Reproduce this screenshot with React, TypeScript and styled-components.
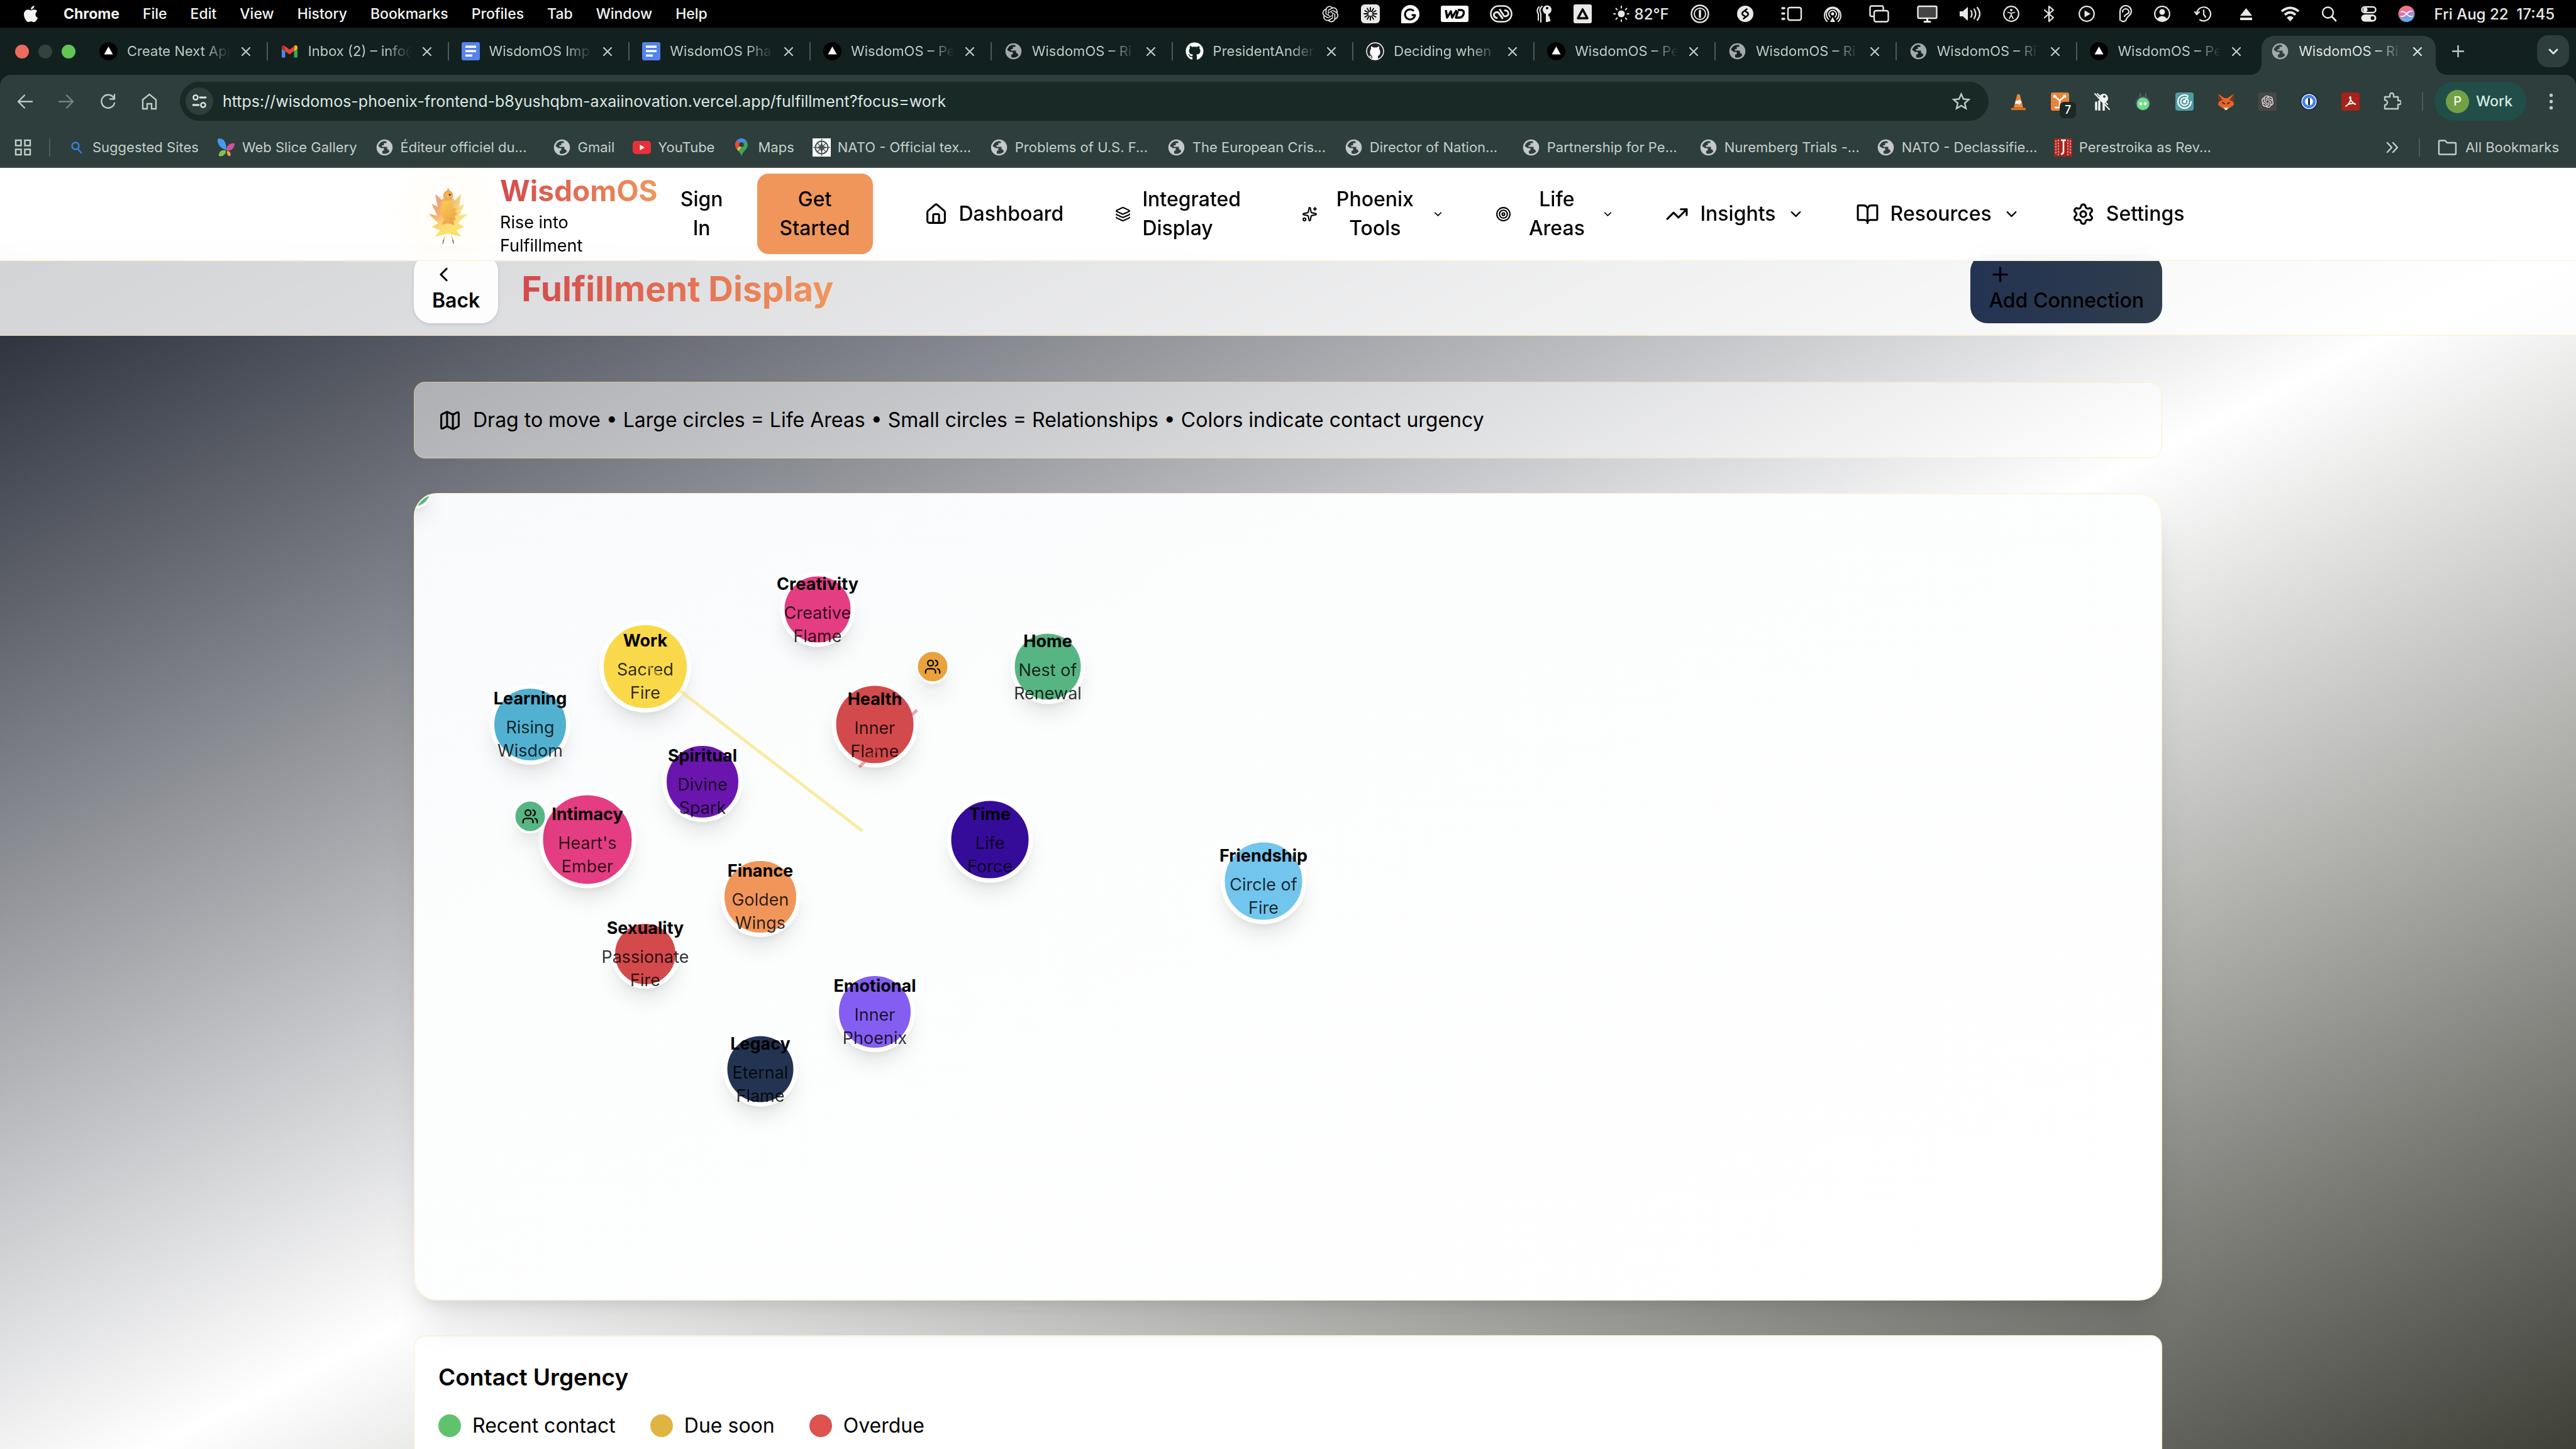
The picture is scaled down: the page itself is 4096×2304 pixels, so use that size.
import React from "react";
import styled, { createGlobalStyle, css } from "styled-components";
import {
  BookOpen,
  ChevronDown,
  ChevronLeft,
  House,
  Layers,
  Map as MapIcon,
  Plus,
  Settings,
  Sparkles,
  Target,
  TrendingUp,
  Users,
} from "lucide-react";
import { FaApple, FaGithub } from "react-icons/fa";
import { RiOpenaiFill } from "react-icons/ri";

const color = {
  strip: "#12211f",
  bar: "#2d3e3c",
  field: "#182926",
  chromeText: "#bfcbc8",
  chromeBright: "#e1e7e5",
  line: "#4a5c59",
  ink: "#000000",
  gold: "rgba(250, 217, 73, 0.2)",
  red: "#d34a4c",
  orange: "#f0965b",
};

const GlobalStyle = createGlobalStyle`
  *, *::before, *::after { box-sizing: border-box; }
  body { margin: 0; background: #ffffff; overflow: hidden; }
  button, input { font: inherit; color: inherit; }
  button { border: 0; padding: 0; background: none; cursor: pointer; }
  a { color: inherit; text-decoration: none; }
  svg { display: block; flex: none; }
  h1, h2, p, ul { margin: 0; padding: 0; }
`;

const Screen = styled.div`
  height: 100vh;
  display: flex;
  flex-direction: column;
  overflow: hidden;
  font-family: Inter, "Liberation Sans", sans-serif;
  color: ${color.ink};
`;

/* ---------- macOS menu bar ---------- */

const MenuBar = styled.div`
  flex: none;
  height: 44px;
  padding: 0 34px;
  display: flex;
  align-items: center;
  background: #000;
  color: #f4f4f4;
  font-size: 23px;
  font-weight: 500;
`;

const MenuList = styled.nav`
  display: flex;
  align-items: center;
  gap: 37px;
  flex: 1;
`;

const MenuItem = styled.button<{ $bold?: boolean }>`
  font-weight: ${(p) => (p.$bold ? 700 : 500)};
  white-space: nowrap;
`;

const Status = styled.div`
  display: flex;
  align-items: center;
  color: #e8e8e8;
`;

const GAPS = { s: 34, m: 38, l: 44 };

const StatusIcon = styled.button<{ $w: number; $gap: keyof typeof GAPS }>`
  width: ${(p) => p.$w}px;
  height: 30px;
  margin-left: ${(p) => GAPS[p.$gap]}px;
  display: flex;
  align-items: center;
  justify-content: center;
`;

const Weather = styled.button`
  display: flex;
  align-items: center;
  gap: 8px;
  margin-left: 34px;
  font-size: 24px;
  white-space: nowrap;
`;

const Clock = styled.time`
  margin-left: 31px;
  font-size: 24px;
  white-space: pre;
`;

const Pic = ({ w, h = 28, children }: { w: number; h?: number; children: React.ReactNode }) => (
  <svg width={w} height={h} viewBox={`0 0 ${w} ${h}`} fill="none" stroke="currentColor" strokeWidth="2.4" strokeLinecap="round" strokeLinejoin="round" aria-hidden>
    {children}
  </svg>
);

const rays = (n: number, cx: number, cy: number, r1: number, r2: number) =>
  Array.from({ length: n }, (_, i) => {
    const a = (i / n) * Math.PI * 2;
    return <path key={i} d={`M${cx + r1 * Math.cos(a)} ${cy + r1 * Math.sin(a)}L${cx + r2 * Math.cos(a)} ${cy + r2 * Math.sin(a)}`} />;
  });

type StatusEntry = { name: string; w: number; gap: keyof typeof GAPS; pic: React.ReactNode };

const appStatus: StatusEntry[] = [
  { name: "ChatGPT", w: 29, gap: "s", pic: <RiOpenaiFill size={31} /> },
  {
    name: "Claude", w: 30, gap: "s",
    pic: <Pic w={30} h={30}><rect width="30" height="30" rx="6" fill="currentColor" stroke="none" /><g stroke="#000" strokeWidth="1.8">{rays(12, 15, 15, 4, 10)}</g></Pic>,
  },
  {
    name: "Grammarly", w: 29, gap: "s",
    pic: <Pic w={29} h={29}><path d="M0 29V14A14.500 14.500 0 1 1 14.500 29Z" fill="#fff" stroke="none" /><path d="M20 9.500A8 8 0 1 0 22 16H16.500" stroke="#000" strokeWidth="3" strokeLinecap="butt" /></Pic>,
  },
  {
    name: "WD", w: 44, gap: "s",
    pic: <Pic w={44} h={26}><rect width="44" height="26" rx="3" fill="#fff" stroke="none" /><path d="M8 7L10 19L16 9L18 19L25 7M27 7H33Q38 8 36 14Q34 19 29 19H24L27 9" stroke="#000" strokeWidth="3.400" strokeLinecap="butt" /></Pic>,
  },
  {
    name: "Creative Cloud", w: 36, gap: "s",
    pic: <Pic w={36}><rect x="1.500" y="1.500" width="33" height="25" rx="12.500" strokeWidth="2.600" /><path d="M20 21L13.500 12A5 5 0 0 0 6.500 14.500A5 5 0 0 0 11 20.500M16 7.500L22.500 17.500A5 5 0 0 0 29.500 14A5.500 5.500 0 0 0 24 8.500" strokeWidth="3" /></Pic>,
  },
  {
    name: "Keychain", w: 25, gap: "m",
    pic: <Pic w={25}><circle cx="17" cy="7.500" r="7" fill="currentColor" stroke="none" /><path d="M17 12V27M17 24H22M17 20H21" strokeWidth="4" strokeLinecap="butt" /><circle cx="17" cy="5" r="2" fill="#000" stroke="none" /><path d="M9 2Q3 7 7 13V27M4 3Q-1 8 3 14V24" strokeWidth="2" /></Pic>,
  },
  {
    name: "Text input", w: 29, gap: "s",
    pic: <Pic w={29} h={30}><rect width="29" height="30" rx="3" fill="currentColor" stroke="none" /><path d="M14.500 8L22 22H7Z" stroke="#000" strokeWidth="3.600" /></Pic>,
  },
];

const systemStatus: StatusEntry[] = [
  { name: "1Password", w: 30, gap: "s", pic: <Pic w={30} h={30}><circle cx="15" cy="15" r="13.500" /><circle cx="15" cy="15" r="9" strokeWidth="2" /><path d="M15 10V20" strokeWidth="3.500" /></Pic> },
  { name: "Shazam", w: 26, gap: "l", pic: <Pic w={26}><circle cx="13" cy="14" r="13" fill="currentColor" stroke="none" /><path d="M15.500 6.500L9 11.500A3.200 3.200 0 0 0 9.500 16L12 17.500M10.500 21.500L17 16.500A3.200 3.200 0 0 0 16.500 12L14 10.500" stroke="#000" strokeWidth="2.600" /></Pic> },
  { name: "Stage Manager", w: 34, gap: "l", pic: <Pic w={34}><rect x="11" y="4" width="21" height="20" rx="3" /><path d="M2 5H5M2 13.500H5M2 22H5" strokeWidth="3.500" /></Pic> },
  { name: "AirDrop", w: 28, gap: "s", pic: <Pic w={28}><circle cx="14" cy="14" r="2.500" fill="currentColor" stroke="none" /><path d="M10 19A6 6 0 1 1 18 19M7.500 22.500A10 10 0 1 1 20.500 22.500M5 26A13 13 0 1 1 23 26" strokeWidth="2" /><path d="M14 19L10 27H18Z" fill="currentColor" stroke="none" /></Pic> },
  { name: "Windows", w: 32, gap: "l", pic: <Pic w={32}><path d="M6 18H4A2.500 2.500 0 0 1 1.500 15.500V4A2.500 2.500 0 0 1 4 1.500H20A2.500 2.500 0 0 1 22.500 4V7" /><rect x="8" y="9" width="22.500" height="17.500" rx="3" /></Pic> },
  { name: "Display", w: 33, gap: "l", pic: <Pic w={33}><rect x="1.500" y="2" width="30" height="19" rx="2" fill="#444" /><path d="M16.500 22V26M12 26.500H21" strokeWidth="3" /></Pic> },
  { name: "Sound", w: 36, gap: "s", pic: <Pic w={36}><path d="M1 10H6L14 3V25L6 18H1Z" fill="currentColor" stroke="none" /><path d="M19 9Q22 14 19 19M24 6.500Q29 14 24 21.500M29 4Q37 14 29 24" strokeWidth="2.200" /></Pic> },
  { name: "Accessibility", w: 26, gap: "s", pic: <Pic w={26}><circle cx="13" cy="14" r="11.800" strokeWidth="2.200" /><circle cx="13" cy="8" r="2" fill="currentColor" stroke="none" /><path d="M7.500 11.500L13 13L18.500 11.500M13 13V16L10 21.500M13 16L16 21.500" strokeWidth="1.800" /></Pic> },
  { name: "Bluetooth", w: 18, gap: "m", pic: <Pic w={18}><path d="M2 8L16 20L9 26V2L16 8L2 20" strokeWidth="2.200" /></Pic> },
  { name: "Now Playing", w: 26, gap: "m", pic: <Pic w={26}><circle cx="13" cy="14" r="11.800" strokeWidth="2.200" /><path d="M9.500 8.500L19 14L9.500 19.500Z" fill="currentColor" stroke="none" /></Pic> },
  { name: "Hearing", w: 22, gap: "m", pic: <Pic w={22}><path d="M2 24V10A9 9 0 0 1 20 10C20 17 13 17 12 23Q9 28 4 25M6 11A5 5 0 0 1 16 11C16 15 10 14 9 18" strokeWidth="2.200" /></Pic> },
  { name: "User", w: 26, gap: "s", pic: <Pic w={26}><circle cx="13" cy="14" r="11.800" strokeWidth="2.200" /><circle cx="13" cy="11" r="4.500" fill="currentColor" stroke="none" /><path d="M5 22Q13 13 21 22Q13 29 5 22Z" fill="currentColor" stroke="none" /></Pic> },
  { name: "Time Machine", w: 28, gap: "m", pic: <Pic w={28}><path d="M4 14A11 11 0 1 1 9 23.500M1 11L4 15L8 11M15 8V15L18 19" strokeWidth="2.200" /></Pic> },
  { name: "Eject", w: 21, gap: "l", pic: <Pic w={21}><path d="M10.500 5L20 17H1Z" fill="currentColor" stroke="none" /><rect x="1" y="20" width="19" height="4" fill="currentColor" stroke="none" /></Pic> },
  { name: "Wi-Fi", w: 31, gap: "l", pic: <Pic w={31}><path d="M2 10Q15.500 -1 29 10M7 15.500Q15.500 8 24 15.500" strokeWidth="4" strokeLinecap="butt" /><path d="M10 20Q15.500 15 21 20L15.500 26Z" fill="currentColor" stroke="none" /></Pic> },
  { name: "Spotlight", w: 25, gap: "s", pic: <Pic w={25}><circle cx="10.500" cy="12" r="8.500" strokeWidth="2.400" /><path d="M17 18.500L23 25" strokeWidth="2.800" /></Pic> },
  { name: "Control Center", w: 25, gap: "m", pic: <Pic w={25}><rect x="1.500" y="3" width="22" height="9" rx="4.500" /><circle cx="7" cy="7.500" r="3.500" fill="currentColor" stroke="none" /><rect x="0.500" y="15" width="24" height="11.500" rx="5.700" fill="currentColor" stroke="none" /><circle cx="18.500" cy="20.800" r="3" fill="#000" stroke="none" /></Pic> },
  {
    name: "Siri", w: 27, gap: "s",
    pic: <Pic w={27}><defs><linearGradient id="siri" x1="0" y1="0" x2="0.400" y2="1"><stop offset="0" stopColor="#f08a3c" /><stop offset="0.500" stopColor="#e86bb4" /><stop offset="1" stopColor="#4fb6f2" /></linearGradient></defs><circle cx="13.500" cy="14" r="13" fill="url(#siri)" stroke="none" /><path d="M5 11Q9 9 13.500 14T22 18M5 18Q9 19 13.500 14T22 10" stroke="#fff" strokeWidth="1.800" /></Pic>,
  },
];

/* ---------- browser tab strip ---------- */

const TabStrip = styled.div`
  flex: none;
  height: 75px;
  display: flex;
  background: ${color.strip};
  color: ${color.chromeText};
  font-size: 22px;
`;

const Lights = styled.div`
  flex: none;
  width: 138px;
  padding-left: 24px;
  display: flex;
  align-items: center;
  gap: 15px;
`;

const Light = styled.button<{ $fill: string }>`
  width: 22px;
  height: 22px;
  border-radius: 50%;
  background: ${(p) => p.$fill};
`;

const Tabs = styled.div`
  flex: 1;
  min-width: 0;
  display: flex;
`;

const Tab = styled.div<{ $active: boolean; $divider: boolean }>`
  position: relative;
  isolation: isolate;
  flex: 1;
  min-width: 0;
  padding: 0 25px 0 20px;
  display: flex;
  align-items: center;
  gap: 15px;
  ${(p) =>
    p.$divider &&
    css`
      background: linear-gradient(${color.line}, ${color.line}) right center / 2px 29px no-repeat;
    `}
  ${(p) =>
    p.$active &&
    css`
      color: ${color.chromeBright};
      &::before {
        content: "";
        position: absolute;
        z-index: -1;
        inset: 13px 6px 0 5px;
        border-radius: 20px 20px 0 0;
        background: ${color.bar};
      }
      &::after {
        content: "";
        position: absolute;
        z-index: -1;
        left: -13px;
        right: -12px;
        bottom: 0;
        height: 18px;
        background:
          radial-gradient(circle at 0 0, transparent 18px, ${color.bar} 18px) left / 18px 18px no-repeat,
          radial-gradient(circle at 100% 0, transparent 18px, ${color.bar} 18px) right / 18px 18px no-repeat;
      }
    `}
`;

const TabTitle = styled.span`
  flex: 1;
  min-width: 0;
  overflow: hidden;
  white-space: nowrap;
  line-height: 29px;
  mask-image: linear-gradient(to right, #000 75%, transparent);
`;

const IconButton = styled.button<{ $size?: number; $dim?: boolean }>`
  flex: none;
  width: ${(p) => p.$size ?? 29}px;
  height: ${(p) => p.$size ?? 29}px;
  display: flex;
  align-items: center;
  justify-content: center;
  opacity: ${(p) => (p.$dim ? 0.5 : 1)};
`;

const StripEnd = styled.div`
  flex: none;
  width: 217px;
  padding: 0 11px 0 15px;
  display: flex;
  align-items: center;
  justify-content: space-between;
`;

const TabSearch = styled.button`
  width: 51px;
  height: 51px;
  border-radius: 18px;
  background: ${color.bar};
  display: flex;
  align-items: center;
  justify-content: center;
  color: ${color.chromeBright};
`;

const VercelMark = () => (
  <svg width="29" height="29" viewBox="0 0 29 29" aria-hidden>
    <circle cx="14.500" cy="14.500" r="14.500" fill="#000" />
    <path d="M14.500 7L21.500 19.500H7.500Z" fill="#fff" />
  </svg>
);

const GlobeMark = ({ tone = "#b4b8bb" }: { tone?: string }) => (
  <svg width="29" height="29" viewBox="0 0 29 29" fill="none" aria-hidden>
    <circle cx="14.500" cy="14.500" r="11.500" stroke={tone} strokeWidth="2.600" />
    <path d="M4 12L9 15.500H13.500V19.500H11V24.500A11 11 0 0 1 4 12ZM13 3.500L17.500 4.500V7.500H13.500V11H10.500V13.500H18.500V17.500H20.500L22.500 21.500A12 12 0 0 0 21 5Z" fill={tone} />
  </svg>
);

const DocsMark = () => (
  <svg width="29" height="29" viewBox="0 0 29 29" aria-hidden>
    <rect width="29" height="29" rx="3" fill="#5383ec" />
    <path d="M6 5.500H23V9H6ZM6 12.500H23V16H6ZM6 19.500H17V23H6Z" fill="#fff" />
  </svg>
);

const GmailMark = () => (
  <svg width="29" height="29" viewBox="0 0 29 29" aria-hidden>
    <path d="M2 10V24.500H7.500V13Z" fill="#4a86f5" />
    <path d="M27 10V24.500H21.500V13Z" fill="#34a853" />
    <path d="M21.500 8.500V14.500L27 10.500V7.500Q25.500 3.500 21.500 6Z" fill="#fbbc04" />
    <path d="M2 10.500L7.500 14.500V8.500L5.500 5Q2 4.500 2 8Z" fill="#c5221f" />
    <path d="M6 5.500L14.500 12L23 5.500L21.500 14L14.500 19.500L7.500 14.500Z" fill="#ea4335" />
  </svg>
);

const Cross = () => (
  <Pic w={20} h={20}>
    <path d="M4 4L16 16M16 4L4 16" strokeWidth="2.200" />
  </Pic>
);

type Favicon = "vercel" | "gmail" | "docs" | "globe" | "github" | "githubRing";

const favicons: Record<Favicon, React.ReactNode> = {
  vercel: <VercelMark />,
  gmail: <GmailMark />,
  docs: <DocsMark />,
  globe: <GlobeMark tone="#a3a9ad" />,
  github: <FaGithub size={29} color="#fff" />,
  githubRing: (
    <svg width="29" height="29" viewBox="0 0 29 29" aria-hidden>
      <circle cx="14.500" cy="14.500" r="13.500" fill="#1f2328" stroke="#fff" strokeWidth="1.500" />
      <path d="M10 28V22C5 20 6 13 8 11V6.500L12 8.500H17L21 6.500V11C23 13 24 20 19 22V28Z" fill="#fff" />
      <path d="M9.500 24Q7 24 6 21.500" stroke="#fff" strokeWidth="1.600" fill="none" />
    </svg>
  ),
};

const tabs: { icon: Favicon; title: string }[] = [
  { icon: "vercel", title: "Create Next App" },
  { icon: "gmail", title: "Inbox (2) – info@" },
  { icon: "docs", title: "WisdomOS Imp" },
  { icon: "docs", title: "WisdomOS Pha" },
  { icon: "vercel", title: "WisdomOS – Pe" },
  { icon: "globe", title: "WisdomOS – Ri" },
  { icon: "github", title: "PresidentAnder" },
  { icon: "githubRing", title: "Deciding when" },
  { icon: "vercel", title: "WisdomOS – Pe" },
  { icon: "globe", title: "WisdomOS – Ri" },
  { icon: "globe", title: "WisdomOS – Ri" },
  { icon: "vercel", title: "WisdomOS – Pe" },
  { icon: "globe", title: "WisdomOS – Ri" },
];

/* ---------- browser toolbar and bookmarks ---------- */

const ToolbarShell = styled.div`
  flex: none;
  background: ${color.strip};
`;

const ToolbarBody = styled.div`
  border-radius: 18px 18px 0 0;
  background: ${color.bar};
  border-bottom: 2px solid #454b4b;
  color: ${color.chromeText};
`;

const Toolbar = styled.div`
  height: 84px;
  padding: 0 25px;
  display: flex;
  align-items: center;
`;

const NavButtons = styled.div`
  display: flex;
  gap: 37px;
  margin-right: 34px;
`;

const Omnibox = styled.form`
  flex: 1;
  min-width: 0;
  height: 62px;
  padding: 0 29px 0 9px;
  border-radius: 31px;
  background: ${color.field};
  display: flex;
  align-items: center;
  gap: 15px;
`;

const SiteInfo = styled.button`
  flex: none;
  width: 44px;
  height: 44px;
  border-radius: 50%;
  background: ${color.bar};
  display: flex;
  align-items: center;
  justify-content: center;
  color: ${color.chromeBright};
`;

const UrlField = styled.input`
  flex: 1;
  min-width: 0;
  border: 0;
  padding: 0;
  outline: 0;
  background: none;
  color: #dfe5e3;
  font-size: 25px;
`;

const Extensions = styled.div`
  display: flex;
  gap: 37px;
  margin: 0 33px;
`;

const ExtensionButton = styled(IconButton)`
  position: relative;
`;

const CountBadge = styled.span`
  position: absolute;
  left: 14px;
  top: 15px;
  width: 26px;
  height: 26px;
  border-radius: 7px;
  background: #1d2725;
  color: #fff;
  font-size: 18px;
  font-weight: 500;
  line-height: 26px;
  text-align: center;
`;

const Divider = styled.span`
  flex: none;
  width: 2px;
  height: 29px;
  background: ${color.line};
`;

const Profile = styled.button`
  height: 62px;
  margin: 0 25px 0 18px;
  padding: 0 22px 0 18px;
  border-radius: 31px;
  background: #214e48;
  display: flex;
  align-items: center;
  gap: 11px;
  color: #d5e8e2;
  font-size: 23px;
  font-weight: 500;
`;

const Avatar = styled.span`
  width: 37px;
  height: 37px;
  border-radius: 50%;
  background: #74a045;
  color: #f2f7ea;
  font-size: 20px;
  line-height: 37px;
  text-align: center;
`;

const Bookmarks = styled.div`
  height: 62px;
  padding: 0 27px 0 22px;
  display: flex;
  align-items: center;
  font-size: 22px;
  color: #c5cecc;
`;

const TabGroups = styled(IconButton)`
  margin-right: 27px;
`;

const BookmarkList = styled.nav`
  flex: 1;
  min-width: 0;
  display: flex;
  gap: 29px;
  margin-left: 27px;
`;

const Bookmark = styled.a<{ $clipped?: boolean }>`
  flex: none;
  display: flex;
  align-items: center;
  gap: 11px;
  white-space: nowrap;
  width: ${(p) => (p.$clipped ? "253px" : "auto")};
`;

const AllBookmarks = styled.button`
  display: flex;
  align-items: center;
  gap: 13px;
  margin-left: 28px;
  white-space: nowrap;
`;

const More = styled(IconButton)`
  margin-right: 27px;
`;

const bookmarks: { label: string; clipped?: boolean; icon: React.ReactNode }[] = [
  { label: "Suggested Sites", icon: <Pic w={29} h={29}><circle cx="13" cy="12" r="5.500" stroke="#3d7de0" /><path d="M17 17L22 23" stroke="#3d7de0" /></Pic> },
  {
    label: "Web Slice Gallery",
    icon: (
      <svg width="29" height="29" viewBox="0 0 29 29" aria-hidden>
        <path d="M1 1C10 -2 15 6 15 18C6 17 0 9 1 1Z" fill="#459bea" />
        <path d="M28 8C21 7 15 11 15 19C23 21 28 15 28 8Z" fill="#d4509c" />
        <path d="M3 28C2 21 8 18 14 19C15 25 9 30 3 28Z" fill="#7fc34a" />
        <path d="M16 20C21 20 23 25 21 28C17 29 15 24 16 20Z" fill="#f0a04a" />
      </svg>
    ),
  },
  { label: "Éditeur officiel du...", clipped: true, icon: <GlobeMark tone="#c6c8cb" /> },
  { label: "Gmail", icon: <GlobeMark tone="#c6c8cb" /> },
  { label: "YouTube", icon: <svg width="29" height="29" viewBox="0 0 29 29" aria-hidden><rect y="4" width="29" height="21" rx="5" fill="#e8303b" /><path d="M11.500 10L19 14.500L11.500 19Z" fill="#fff" /></svg> },
  {
    label: "Maps",
    icon: (
      <svg width="29" height="29" viewBox="0 0 29 29" aria-hidden>
        <path d="M14 29C13 21 4 18 4 10A10 10 0 0 1 24 10C24 18 15 21 14 29Z" fill="#3fa45a" />
        <path d="M4 10A10 10 0 0 1 8 2L14 10L7 18Q4 14 4 10Z" fill="#e94a3c" />
        <path d="M7 17L17 6L14 14L9 20Z" fill="#f8bf2f" />
        <path d="M7 3A10 10 0 0 1 21.500 3.500L14 11Z" fill="#4a86f0" />
        <circle cx="14" cy="10" r="3.800" fill={color.bar} />
      </svg>
    ),
  },
  { label: "NATO - Official tex...", clipped: true, icon: <svg width="29" height="29" viewBox="0 0 29 29" fill="none" stroke="#4b4f52" strokeWidth="2" aria-hidden><rect width="29" height="29" fill="#fff" stroke="none" /><circle cx="14.500" cy="14.500" r="10" /><path d="M14.500 1V28M1 14.500H28M8 8L21 21M21 8L8 21" strokeWidth="1.400" /><path d="M14.500 6L17 12L23 14.500L17 17L14.500 23L12 17L6 14.500L12 12Z" fill="#4b4f52" stroke="none" /></svg> },
  { label: "Problems of U.S. F...", clipped: true, icon: <GlobeMark tone="#c6c8cb" /> },
  { label: "The European Cris...", clipped: true, icon: <GlobeMark tone="#c6c8cb" /> },
  { label: "Director of Nation...", clipped: true, icon: <GlobeMark tone="#c6c8cb" /> },
  { label: "Partnership for Pe...", clipped: true, icon: <GlobeMark tone="#c6c8cb" /> },
  { label: "Nuremberg Trials -...", clipped: true, icon: <GlobeMark tone="#c6c8cb" /> },
  { label: "NATO - Declassifie...", clipped: true, icon: <GlobeMark tone="#c6c8cb" /> },
  { label: "Perestroika as Rev...", clipped: true, icon: <svg width="29" height="29" viewBox="0 0 29 29" aria-hidden><rect width="29" height="29" fill="#a5231c" /><path d="M3 3V26M7 2V27M22 2V27M26 3V26" stroke="#d98f8a" strokeWidth="2.200" strokeDasharray="3 1.500" /><path d="M11 3H19M15 3V22Q14 25 11 25" stroke="#fff" strokeWidth="2.600" fill="none" /></svg> },
];

const extensions: { name: string; badge?: string; icon: React.ReactNode }[] = [
  { name: "VLC", icon: <Pic w={29} h={29}><path d="M12.500 3H16.500L22 24H7Z" fill="#ea8a3c" stroke="none" /><path d="M3 24.500H26V28H3Z" fill="#e0702c" stroke="none" /><path d="M10 13H15V10.500L20 15.500L15 20.500V18H9Z" fill="#f6f3ef" stroke="none" /></Pic> },
  { name: "Network", badge: "7", icon: <Pic w={29} h={29}><rect width="29" height="29" rx="3" fill="#e8833a" stroke="none" /><path d="M6 6L14 13L22 6M14 13V24M7 24H20" stroke="#fff" /><circle cx="6" cy="6" r="2.500" fill="#fff" stroke="none" /><circle cx="22" cy="6" r="2.500" fill="#fff" stroke="none" /></Pic> },
  { name: "Keys", icon: <Pic w={29} h={29}><circle cx="18" cy="9" r="7" fill="#f1f3f2" stroke="none" /><circle cx="19" cy="6.500" r="2" fill={color.bar} stroke="none" /><path d="M18 14V28M11 14V28M6 16V27" stroke="#f1f3f2" strokeWidth="3.500" /><path d="M4 2L27 27M8 2L24 19" stroke="#f1f3f2" strokeWidth="2" /></Pic> },
  { name: "Android", icon: <Pic w={29} h={29}><path d="M10 2V8M19 2V8" stroke="#58617a" strokeWidth="2" /><circle cx="14.500" cy="17" r="12" fill="#45525c" stroke="none" /><ellipse cx="14.500" cy="18" rx="10" ry="10" fill="#6fdc8a" stroke="none" /><circle cx="11" cy="18" r="2.400" fill="#fff" stroke="none" /><circle cx="18" cy="18" r="2.400" fill="#fff" stroke="none" /></Pic> },
  { name: "Radar", icon: <Pic w={29} h={29}><rect width="29" height="29" rx="4" fill="#4f9da3" stroke="none" /><circle cx="14.500" cy="14.500" r="10.500" stroke="#fff" strokeWidth="2" strokeDasharray="54 12" /><circle cx="14.500" cy="14.500" r="6" stroke="#fff" strokeWidth="2" /><circle cx="14.500" cy="14.500" r="2.500" fill="#fff" stroke="none" /><path d="M15 14L20 6" stroke="#fff" strokeWidth="2" /></Pic> },
  { name: "MetaMask", icon: <Pic w={29} h={29}><path d="M2 2L12 9H17L27 2L26 14L27 20L20 25L16 27H13L9 25L2 20L3 14Z" fill="#e5672c" stroke="none" /><path d="M2 2L9 12L3 15ZM27 2L20 12L26 15Z" fill="#7c3418" stroke="none" /><path d="M9 16L12 18M20 16L17 18" stroke="#3a2417" strokeWidth="2" /><path d="M11 24H18L16 28H13Z" fill="#e9ddd6" stroke="none" /></Pic> },
  { name: "ChatGPT", icon: <svg width="29" height="29" viewBox="0 0 29 29" aria-hidden><rect width="29" height="29" rx="2" fill="#4a4646" /><RiOpenaiFill x="3" y="3" size={23} color="#f0f0f0" /></svg> },
  { name: "1Password", icon: <Pic w={29} h={29}><circle cx="14.500" cy="14.500" r="14" fill="#222c38" stroke="none" /><circle cx="14.500" cy="14.500" r="12" fill="#fff" stroke="none" /><circle cx="14.500" cy="14.500" r="8.500" stroke="#3c82f0" strokeWidth="4.500" fill="#fff" /><path d="M14.500 10V19" stroke="#222" strokeWidth="3" /></Pic> },
  { name: "Acrobat", icon: <Pic w={29} h={29}><rect width="29" height="29" rx="4" fill="#a82219" stroke="none" /><path d="M7 22C12 19 16 12 14.500 7C12 6 13 13 22 19C24 17 12 16 7 22Z" stroke="#fff" strokeWidth="1.800" /></Pic> },
  { name: "Extensions", icon: <Pic w={29} h={30}><path d="M3 8H11V5A3 3 0 0 1 17 5V8H24V14H26A3 3 0 0 1 26 20H24V27H3V21A4 4 0 0 0 3 13Z" strokeWidth="2.400" /></Pic> },
];

/* ---------- page ---------- */

const Page = styled.div`
  flex: 1;
  min-height: 0;
  background: #ffffff;
`;

const SiteHeader = styled.header`
  position: relative;
  z-index: 2;
  height: 148px;
  border-bottom: 2px solid ${color.gold};
  background: rgba(255, 255, 255, 0.95);
  backdrop-filter: blur(18px);
`;

const Container = styled.div`
  width: 100%;
  max-width: 2926px;
  margin: 0 auto;
  padding: 0 73px;
`;

const HeaderRow = styled(Container)`
  height: 100%;
  display: flex;
  align-items: center;
`;

const Brand = styled.a`
  flex: none;
  display: flex;
  align-items: center;
  gap: 27px;
`;

const PhoenixBox = styled.span`
  width: 110px;
  height: 110px;
  border-radius: 50%;
  box-shadow: 0 0 57px rgba(250, 217, 73, 0.1);
  background: rgba(250, 217, 73, 0.03);
`;

const gradientText = css`
  background: linear-gradient(to right, ${color.red}, ${color.orange});
  background-clip: text;
  -webkit-background-clip: text;
  color: transparent;
`;

const BrandName = styled.span`
  display: block;
  width: max-content;
  font-size: 46px;
  font-weight: 700;
  line-height: 64px;
  ${gradientText}
`;

const Tagline = styled.span`
  display: block;
  max-width: 200px;
  font-size: 27px;
  line-height: 37px;
`;

const SignIn = styled.a`
  width: 144px;
  padding: 0 36px;
  margin-right: 18px;
  font-size: 32px;
  font-weight: 500;
  line-height: 46px;
  text-align: center;
`;

const GetStarted = styled.a`
  width: 185px;
  padding: 18px 36px;
  border-radius: 18px;
  background: ${color.orange};
  font-size: 32px;
  font-weight: 500;
  line-height: 46px;
  text-align: center;
`;

const SiteNav = styled.nav`
  flex: none;
  display: flex;
  align-items: center;
  gap: 10px;
  margin-left: 46px;
`;

const NavItem = styled.a`
  flex: none;
  display: flex;
  align-items: center;
  gap: 18px;
  padding: 0 36px;
  font-size: 32px;
  font-weight: 500;
  line-height: 46px;
`;

const NavLabel = styled.span<{ $width?: number; $left?: boolean }>`
  width: ${(p) => (p.$width ? `${p.$width}px` : "auto")};
  text-align: ${(p) => (p.$left ? "left" : "center")};
`;

const Fulfillment = styled.main`
  margin-top: -29px;
  min-height: 2037px;
  background: linear-gradient(to bottom right, #1f2430, #ffffff 50%, #33342b) top / 100% 2037px no-repeat;
`;

const TitleBar = styled.div`
  border-bottom: 2px solid ${color.gold};
  background: rgba(255, 255, 255, 0.8);
`;

const TitleRow = styled(Container)`
  display: flex;
  align-items: center;
  gap: 37px;
  padding-top: 18px;
  padding-bottom: 18px;
`;

const actionButton = css`
  flex: none;
  height: 110px;
  padding: 0 29px;
  border-radius: 27px;
  display: flex;
  flex-direction: column;
  align-items: flex-start;
  justify-content: center;
  font-size: 32px;
  font-weight: 600;
  line-height: 46px;
  white-space: nowrap;
`;

const BackButton = styled.button`
  ${actionButton}
  background: #fdfdfe;
  box-shadow: 0 2px 5px rgba(35, 51, 82, 0.15);
`;

const AddButton = styled.button`
  ${actionButton}
  font-weight: 500;
  background: linear-gradient(to right, #233352, #2f3d4c);
`;

const PageTitle = styled.h1`
  font-size: 55px;
  font-weight: 700;
  line-height: 73px;
  ${gradientText}
`;

const Grow = styled.span`
  flex: 1;
`;

const Content = styled(Container)`
  padding-top: 73px;
  display: flex;
  flex-direction: column;
  gap: 55px;
`;

const InfoBox = styled.div`
  border: 2px solid ${color.gold};
  border-radius: 18px;
  background: rgba(255, 255, 255, 0.5);
  padding: 36px 37px;
  display: flex;
  align-items: center;
  gap: 18px;
  font-size: 32px;
  line-height: 46px;
`;

const Board = styled.section`
  position: relative;
  height: 1284px;
  overflow: hidden;
  border: 2px solid #fdf5dc;
  border-radius: 37px;
  background: linear-gradient(to bottom right, #f8fafc, #fcfdfd 30%, #ffffff);
  box-shadow:
    0 46px 57px -11px rgba(0, 0, 0, 0.1),
    0 18px 23px -14px rgba(0, 0, 0, 0.1);
`;

const Links = styled.svg`
  position: absolute;
  inset: 0;
  width: 100%;
  height: 100%;
  pointer-events: none;
`;

const Node = styled.button<{ $x: number; $y: number; $size: number; $fill: string; $small?: boolean }>`
  position: absolute;
  left: ${(p) => p.$x}px;
  top: ${(p) => p.$y}px;
  width: ${(p) => p.$size}px;
  height: ${(p) => p.$size}px;
  transform: translate(-50%, -50%);
  border: ${(p) => (p.$small ? 4 : 7)}px solid #ffffff;
  border-radius: 50%;
  background: ${(p) => p.$fill};
  box-shadow:
    0 23px 34px -7px rgba(0, 0, 0, 0.1),
    0 9px 14px -9px rgba(0, 0, 0, 0.1);
  display: flex;
  flex-direction: column;
  align-items: center;
  justify-content: center;
  font-size: 27px;
  line-height: 37px;
`;

const NodeName = styled.span`
  font-weight: 700;
  margin-bottom: 9px;
`;

const NodeNote = styled.span`
  opacity: 0.8;
`;

const LegendCard = styled.section`
  border: 2px solid #fdf5dc;
  border-radius: 18px;
  background: #ffffff;
  padding: 37px;
`;

const LegendTitle = styled.h2`
  margin-bottom: 27px;
  font-size: 37px;
  font-weight: 600;
  line-height: 55px;
`;

const LegendList = styled.ul`
  display: flex;
  gap: 55px;
  list-style: none;
  font-size: 32px;
  line-height: 46px;
`;

const LegendItem = styled.li`
  display: flex;
  align-items: center;
  gap: 18px;
`;

const Dot = styled.span<{ $fill: string }>`
  width: 36px;
  height: 36px;
  border-radius: 50%;
  background: ${(p) => p.$fill};
`;

/* Board coordinates are kept in layout units and drawn at 16/7 of a unit. */
const unit = (n: number) => Math.round((n * 16) / 7);

const areas = [
  { name: "Work", note: "Sacred Fire", x: 160, y: 120, size: 64, fill: "#f9d949" },
  { name: "Health", note: "Inner Flame", x: 320, y: 160, size: 60, fill: "#d34a4c" },
  { name: "Finance", note: "Golden Wings", x: 240, y: 280, size: 56, fill: "#f0965b" },
  { name: "Intimacy", note: "Heart's Ember", x: 120, y: 240, size: 68, fill: "#e43d82" },
  { name: "Time", note: "Life Force", x: 400, y: 240, size: 60, fill: "#350b9a" },
  { name: "Spiritual", note: "Divine Spark", x: 200, y: 200, size: 56, fill: "#6a16ae" },
  { name: "Creativity", note: "Creative Flame", x: 280, y: 80, size: 52, fill: "#e43d82" },
  { name: "Friendship", note: "Circle of Fire", x: 590, y: 269, size: 60, fill: "#72c5ed" },
  { name: "Learning", note: "Rising Wisdom", x: 80, y: 160, size: 56, fill: "#52b1d0" },
  { name: "Home", note: "Nest of Renewal", x: 440, y: 120, size: 52, fill: "#57b584" },
  { name: "Sexuality", note: "Passionate Fire", x: 160, y: 320, size: 48, fill: "#d34a4c" },
  { name: "Emotional", note: "Inner Phoenix", x: 320, y: 360, size: 56, fill: "#845ef0" },
  { name: "Legacy", note: "Eternal Flame", x: 240, y: 400, size: 52, fill: "#233352" },
];

const people = [
  { x: 360, y: 120, fill: "#e9a23c" },
  { x: 80, y: 224, fill: "#57b584" },
  { x: 0, y: -2, fill: "#57b584" },
];

const legend = [
  { label: "Recent contact", fill: "#60c26c" },
  { label: "Due soon", fill: "#e0b440" },
  { label: "Overdue", fill: "#dd524d" },
];

const Phoenix = () => (
  <svg width="110" height="110" viewBox="15 60 360 360" aria-hidden>
    <defs>
      <linearGradient id="wings" x1="0" y1="0" x2="0.800" y2="0.500">
        <stop offset="0" stopColor="#ee8a7c" />
        <stop offset="0.500" stopColor="#f4ae74" />
        <stop offset="1" stopColor="#fbe17c" />
      </linearGradient>
      <linearGradient id="tail" x1="0" y1="0" x2="0" y2="1">
        <stop offset="0.450" stopColor="#fbe06e" stopOpacity="0" />
        <stop offset="0.900" stopColor="#fbe06e" />
      </linearGradient>
      <linearGradient id="core" x1="0" y1="0" x2="0.600" y2="1">
        <stop offset="0" stopColor="#fbd44e" />
        <stop offset="1" stopColor="#eda04e" />
      </linearGradient>
      <radialGradient id="head">
        <stop offset="0" stopColor="#f7c13c" />
        <stop offset="1" stopColor="#f0a25c" />
      </radialGradient>
    </defs>
    {["url(#wings)", "url(#tail)"].map((fill) => (
      <path key={fill} fill={fill} d="M194 155L165 162L160 168L127 137L139 204L108 188L137 249L92 240L143 288L110 308L152 326L127 358L194 342L261 358L236 326L277 308L244 288L295 240L250 249L279 188L250 204L261 137L228 172L223 162Z" />
    ))}
    <path fill="url(#core)" d="M180 172L158 178L164 196L152 200L162 212L146 216L160 228L150 246L166 246L164 262L174 262L160 297L194 288L225 299L222 272L235 272L226 253L245 238L230 232L238 211L216 208L222 184L208 188L205 170Z" />
    <path fill="#f09a84" d="M185 124L194 103L203 124Z" />
    <circle cx="194" cy="145" r="26" fill="url(#head)" />
    <circle cx="202" cy="141" r="5.500" fill="#3f4650" />
    <path d="M175 358L171 376M212 358L217 376" stroke="#f3b45c" strokeWidth="5" />
    <path d="M171 374L166 395M217 374L222 395" stroke="#6b6664" strokeWidth="5" />
  </svg>
);

export default function App() {
  return (
    <Screen>
      <GlobalStyle />

      <MenuBar>
        <MenuList aria-label="Menu bar">
          <MenuItem aria-label="Apple"><FaApple size={30} /></MenuItem>
          <MenuItem $bold>Chrome</MenuItem>
          {["File", "Edit", "View", "History", "Bookmarks", "Profiles", "Tab", "Window", "Help"].map((m) => (
            <MenuItem key={m}>{m}</MenuItem>
          ))}
        </MenuList>
        <Status>
          {appStatus.map((s) => (
            <StatusIcon key={s.name} aria-label={s.name} $w={s.w} $gap={s.gap}>{s.pic}</StatusIcon>
          ))}
          <Weather>
            <Pic w={26}>
              <circle cx="13" cy="14" r="5.500" fill="currentColor" stroke="none" />
              <g strokeWidth="2">{rays(8, 13, 14, 9.5, 12)}</g>
            </Pic>
            82°F
          </Weather>
          {systemStatus.map((s) => (
            <StatusIcon key={s.name} aria-label={s.name} $w={s.w} $gap={s.gap}>{s.pic}</StatusIcon>
          ))}
          <Clock>{"Fri Aug 22  17:45"}</Clock>
        </Status>
      </MenuBar>

      <TabStrip>
        <Lights>
          <Light $fill="#ed6a5e" aria-label="Close window" />
          <Light $fill="#34423f" aria-label="Minimize window" />
          <Light $fill="#62c554" aria-label="Zoom window" />
        </Lights>
        <Tabs>
          {tabs.map((t, i) => (
            <Tab key={i} $active={i === tabs.length - 1} $divider={i < tabs.length - 2}>
              {favicons[t.icon]}
              <TabTitle>{t.title}</TabTitle>
              <IconButton $size={20} aria-label="Close tab"><Cross /></IconButton>
            </Tab>
          ))}
        </Tabs>
        <StripEnd>
          <IconButton aria-label="New tab"><Pic w={29} h={29}><path d="M14.500 6V23M6 14.500H23" /></Pic></IconButton>
          <TabSearch aria-label="Search tabs"><Pic w={20} h={20}><path d="M4 7L10 13L16 7" strokeWidth="2.800" /></Pic></TabSearch>
        </StripEnd>
      </TabStrip>

      <ToolbarShell>
        <ToolbarBody>
          <Toolbar>
            <NavButtons>
              <IconButton aria-label="Back"><Pic w={29} h={29}><path d="M26 14.500H4M14 4.500L4 14.500L14 24.500" /></Pic></IconButton>
              <IconButton $dim aria-label="Forward"><Pic w={29} h={29}><path d="M3 14.500H25M15 4.500L25 14.500L15 24.500" /></Pic></IconButton>
              <IconButton aria-label="Reload"><Pic w={29} h={29}><path d="M24 9A10.500 10.500 0 1 0 25 17M25 3.500V10.500H18" /></Pic></IconButton>
              <IconButton aria-label="Home"><Pic w={29} h={29}><path d="M4 11.500L14.500 3L25 11.500V26H18V18H11V26H4Z" strokeLinejoin="miter" /></Pic></IconButton>
            </NavButtons>
            <Omnibox onSubmit={(e) => e.preventDefault()}>
              <SiteInfo type="button" aria-label="Site information">
                <Pic w={26} h={26}><circle cx="7" cy="7" r="3.600" /><path d="M14 7H23M3 19H12" strokeWidth="2.800" /><circle cx="19" cy="19" r="3.600" /></Pic>
              </SiteInfo>
              <UrlField
                aria-label="Address and search bar"
                defaultValue="https://wisdomos-phoenix-frontend-b8yushqbm-axaiinovation.vercel.app/fulfillment?focus=work"
              />
              <IconButton type="button" aria-label="Bookmark this page">
                <Pic w={29} h={29}><path d="M14.500 2.500L18 10.500L26.500 11.300L20 17L22 25.500L14.500 21L7 25.500L9 17L2.500 11.300L11 10.500Z" strokeLinejoin="miter" /></Pic>
              </IconButton>
            </Omnibox>
            <Extensions>
              {extensions.map((x) => (
                <ExtensionButton key={x.name} aria-label={x.name}>
                  {x.icon}
                  {x.badge && <CountBadge>{x.badge}</CountBadge>}
                </ExtensionButton>
              ))}
            </Extensions>
            <Divider />
            <Profile><Avatar>P</Avatar>Work</Profile>
            <IconButton aria-label="Chrome menu">
              <Pic w={29} h={29}><g fill="currentColor" stroke="none"><circle cx="14.500" cy="4.500" r="2.700" /><circle cx="14.500" cy="14.500" r="2.700" /><circle cx="14.500" cy="24.500" r="2.700" /></g></Pic>
            </IconButton>
          </Toolbar>
          <Bookmarks>
            <TabGroups aria-label="Tab groups">
              <Pic w={29} h={29}><g strokeLinejoin="miter"><rect x="3" y="3" width="8.500" height="8.500" /><rect x="17.500" y="3" width="8.500" height="8.500" /><rect x="3" y="17.500" width="8.500" height="8.500" /><rect x="17.500" y="17.500" width="8.500" height="8.500" /></g></Pic>
            </TabGroups>
            <Divider />
            <BookmarkList aria-label="Bookmarks">
              {bookmarks.map((b) => (
                <Bookmark key={b.label} href="#" $clipped={b.clipped}>{b.icon}{b.label}</Bookmark>
              ))}
            </BookmarkList>
            <More aria-label="More bookmarks"><Pic w={29} h={29}><path d="M6 7L13 14.500L6 22M15 7L22 14.500L15 22" /></Pic></More>
            <Divider />
            <AllBookmarks>
              <Pic w={31} h={29}><path d="M2 5Q2 3.500 3.500 3.500H12L15 7H27.500Q29 7 29 8.500V24Q29 25.500 27.500 25.500H3.500Q2 25.500 2 24Z" /></Pic>
              All Bookmarks
            </AllBookmarks>
          </Bookmarks>
        </ToolbarBody>
      </ToolbarShell>

      <Page>
        <SiteHeader>
          <HeaderRow>
            <Brand href="#">
              <PhoenixBox><Phoenix /></PhoenixBox>
              <span>
                <BrandName>WisdomOS</BrandName>
                <Tagline>Rise into Fulfillment</Tagline>
              </span>
            </Brand>
            <SignIn href="#">Sign In</SignIn>
            <GetStarted href="#">Get Started</GetStarted>
            <SiteNav aria-label="Main">
              <NavItem href="#"><House size={37} /><NavLabel>Dashboard</NavLabel></NavItem>
              <NavItem href="#"><Layers size={25} /><NavLabel $width={172} $left>Integrated Display</NavLabel></NavItem>
              <NavItem href="#"><Sparkles size={25} /><NavLabel $width={146}>Phoenix Tools</NavLabel><ChevronDown size={19} /></NavItem>
              <NavItem href="#"><Target size={25} /><NavLabel $width={108}>Life Areas</NavLabel><ChevronDown size={19} /></NavItem>
              <NavItem href="#"><TrendingUp size={37} /><NavLabel>Insights</NavLabel><ChevronDown size={27} /></NavItem>
              <NavItem href="#"><BookOpen size={37} /><NavLabel>Resources</NavLabel><ChevronDown size={27} /></NavItem>
              <NavItem href="#"><Settings size={37} /><NavLabel>Settings</NavLabel></NavItem>
            </SiteNav>
          </HeaderRow>
        </SiteHeader>

        <Fulfillment>
          <TitleBar>
            <TitleRow>
              <BackButton><ChevronLeft size={37} />Back</BackButton>
              <PageTitle>Fulfillment Display</PageTitle>
              <Grow />
              <AddButton><Plus size={37} />Add Connection</AddButton>
            </TitleRow>
          </TitleBar>

          <Content>
            <InfoBox>
              <MapIcon size={37} />
              <p>Drag to move • Large circles = Life Areas • Small circles = Relationships • Colors indicate contact urgency</p>
            </InfoBox>

            <Board aria-label="Life areas">
              {areas.map((a) => (
                <Node key={a.name} $x={unit(a.x)} $y={unit(a.y)} $size={unit(a.size)} $fill={a.fill}>
                  <NodeName>{a.name}</NodeName>
                  <NodeNote>{a.note}</NodeNote>
                </Node>
              ))}
              {people.map((p, i) => (
                <Node key={i} $small aria-label="Relationship" $x={unit(p.x)} $y={unit(p.y)} $size={55} $fill={p.fill}>
                  <Users size={27} />
                </Node>
              ))}
              <Links aria-hidden>
                <line x1={unit(160)} y1={unit(118)} x2={unit(311)} y2={unit(234)} stroke="#f9d949" strokeOpacity="0.500" strokeWidth="5" />
                <line x1={unit(349)} y1={unit(150)} x2={unit(309)} y2={unit(190)} stroke="#d34a4c" strokeOpacity="0.500" strokeWidth="5" />
              </Links>
            </Board>

            <LegendCard>
              <LegendTitle>Contact Urgency</LegendTitle>
              <LegendList>
                {legend.map((l) => (
                  <LegendItem key={l.label}><Dot $fill={l.fill} />{l.label}</LegendItem>
                ))}
              </LegendList>
            </LegendCard>
          </Content>
        </Fulfillment>
      </Page>
    </Screen>
  );
}
